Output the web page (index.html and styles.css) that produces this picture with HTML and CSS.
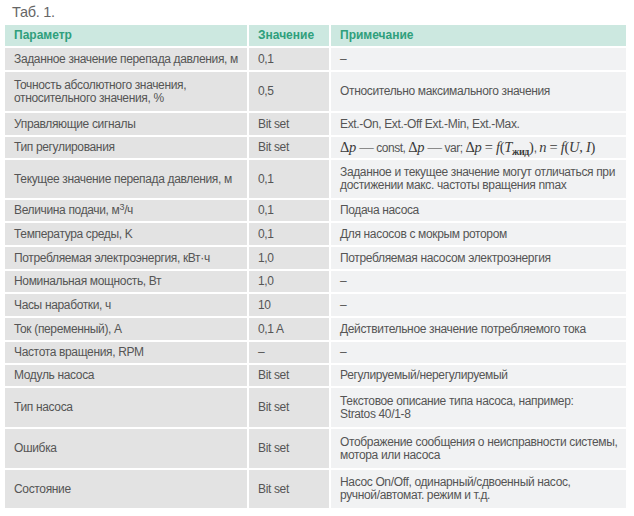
FILE: index.html
```html
<!DOCTYPE html>
<html lang="ru">
<head>
<meta charset="utf-8">
<link rel="stylesheet" href="styles.css">
</head>
<body>
<div class="page">
  <div class="caption">Таб. 1.</div>
  <table class="spec">
    <colgroup>
      <col class="c1"><col class="c2"><col class="c3">
    </colgroup>
    <thead>
      <tr class="head"><th>Параметр</th><th>Значение</th><th>Примечание</th></tr>
    </thead>
    <tbody>
      <tr class="h24"><td>Заданное значение перепада давления, м</td><td>0,1</td><td>–</td></tr>
      <tr class="h41"><td>Точность абсолютного значения,<br>относительного значения, %</td><td>0,5</td><td>Относительно максимального значения</td></tr>
      <tr class="h24"><td>Управляющие сигналы</td><td>Bit set</td><td>Ext.-On, Ext.-Off Ext.-Min, Ext.-Max.</td></tr>
      <tr class="h23"><td>Тип регулирования</td><td>Bit set</td><td class="formula"><span class="m">Δ<i>p</i> —</span> const, <span class="m">Δ<i>p</i> —</span> var; <span class="m">Δ<i>p</i> = <i>f</i>(<i>T</i><sub>жид</sub>)</span>, <span class="m"><i>n</i> = <i>f</i>(<i>U</i>, <i>I</i>)</span></td></tr>
      <tr class="h40"><td>Текущее значение перепада давления, м</td><td>0,1</td><td>Заданное и текущее значение могут отличаться при<br>достижении макс. частоты вращения nmax</td></tr>
      <tr class="h23"><td>Величина подачи, м<sup>3</sup>/ч</td><td>0,1</td><td>Подача насоса</td></tr>
      <tr class="h24"><td>Температура среды, K</td><td>0,1</td><td>Для насосов с мокрым ротором</td></tr>
      <tr class="h24"><td>Потребляемая электроэнергия, кВт·ч</td><td>1,0</td><td>Потребляемая насосом электроэнергия</td></tr>
      <tr class="h23"><td>Номинальная мощность, Вт</td><td>1,0</td><td>–</td></tr>
      <tr class="h24"><td>Часы наработки, ч</td><td>10</td><td>–</td></tr>
      <tr class="h24"><td>Ток (переменный), A</td><td>0,1 A</td><td>Действительное значение потребляемого тока</td></tr>
      <tr class="h23"><td>Частота вращения, RPM</td><td>–</td><td>–</td></tr>
      <tr class="h23"><td>Модуль насоса</td><td>Bit set</td><td>Регулируемый/нерегулируемый</td></tr>
      <tr class="h41"><td>Тип насоса</td><td>Bit set</td><td>Текстовое описание типа насоса, например:<br>Stratos 40/1-8</td></tr>
      <tr class="h41"><td>Ошибка</td><td>Bit set</td><td>Отображение сообщения о неисправности системы,<br>мотора или насоса</td></tr>
      <tr class="h40"><td>Состояние</td><td>Bit set</td><td>Насос On/Off, одинарный/сдвоенный насос,<br>ручной/автомат. режим и т.д.</td></tr>
    </tbody>
  </table>
</div>
</body>
</html>
```
FILE: styles.css
```css
html, body {
  margin: 0;
  padding: 0;
  background: #ffffff;
}
.page {
  padding: 4px 0 0 5px;
  font-family: "Liberation Sans", Arial, sans-serif;
  color: #555555;
}
.caption {
  font-size: 14.5px;
  line-height: 16px;
  height: 21px;
  padding-left: 7px;
  color: #666666;
  letter-spacing: -0.3px;
}
.spec {
  width: 621px;
  border-collapse: separate;
  border-spacing: 0;
  table-layout: fixed;
  font-size: 12px;
  line-height: 13px;
  letter-spacing: -0.35px;
}
.c1 { width: 244px; }
.c2 { width: 82px; }
.c3 { width: 295px; }
.spec th, .spec td {
  box-sizing: border-box;
  padding: 0 6px 0 9px;
  text-align: left;
  vertical-align: middle;
  border-bottom: 2px solid #ffffff;
  border-right: 2px solid #ffffff;
  white-space: nowrap;
}
.spec th:last-child, .spec td:last-child {
  border-right: 0;
}
.head th {
  height: 23px;
  background: #cce8e0;
  color: #2f9f7c;
  font-weight: bold;
  letter-spacing: 0;
}
.spec td {
  background: #e3e3e3;
}
.spec td:last-child {
  background: #f1f2f3;
}
.h23 td { height: 23px; }
.h24 td { height: 24px; }
.h40 td { height: 40px; }
.h41 td { height: 41px; }
sup {
  font-size: 9px;
  line-height: 0;
  vertical-align: 4px;
}
.formula {
  letter-spacing: -0.5px;
}
.formula .m {
  font-family: "Liberation Serif", "Times New Roman", serif;
  font-size: 14.5px;
  letter-spacing: -0.3px;
  color: #3a3a3a;
}
.formula sub {
  font-size: 10px;
  font-weight: bold;
  line-height: 0;
  vertical-align: -3px;
}
```
